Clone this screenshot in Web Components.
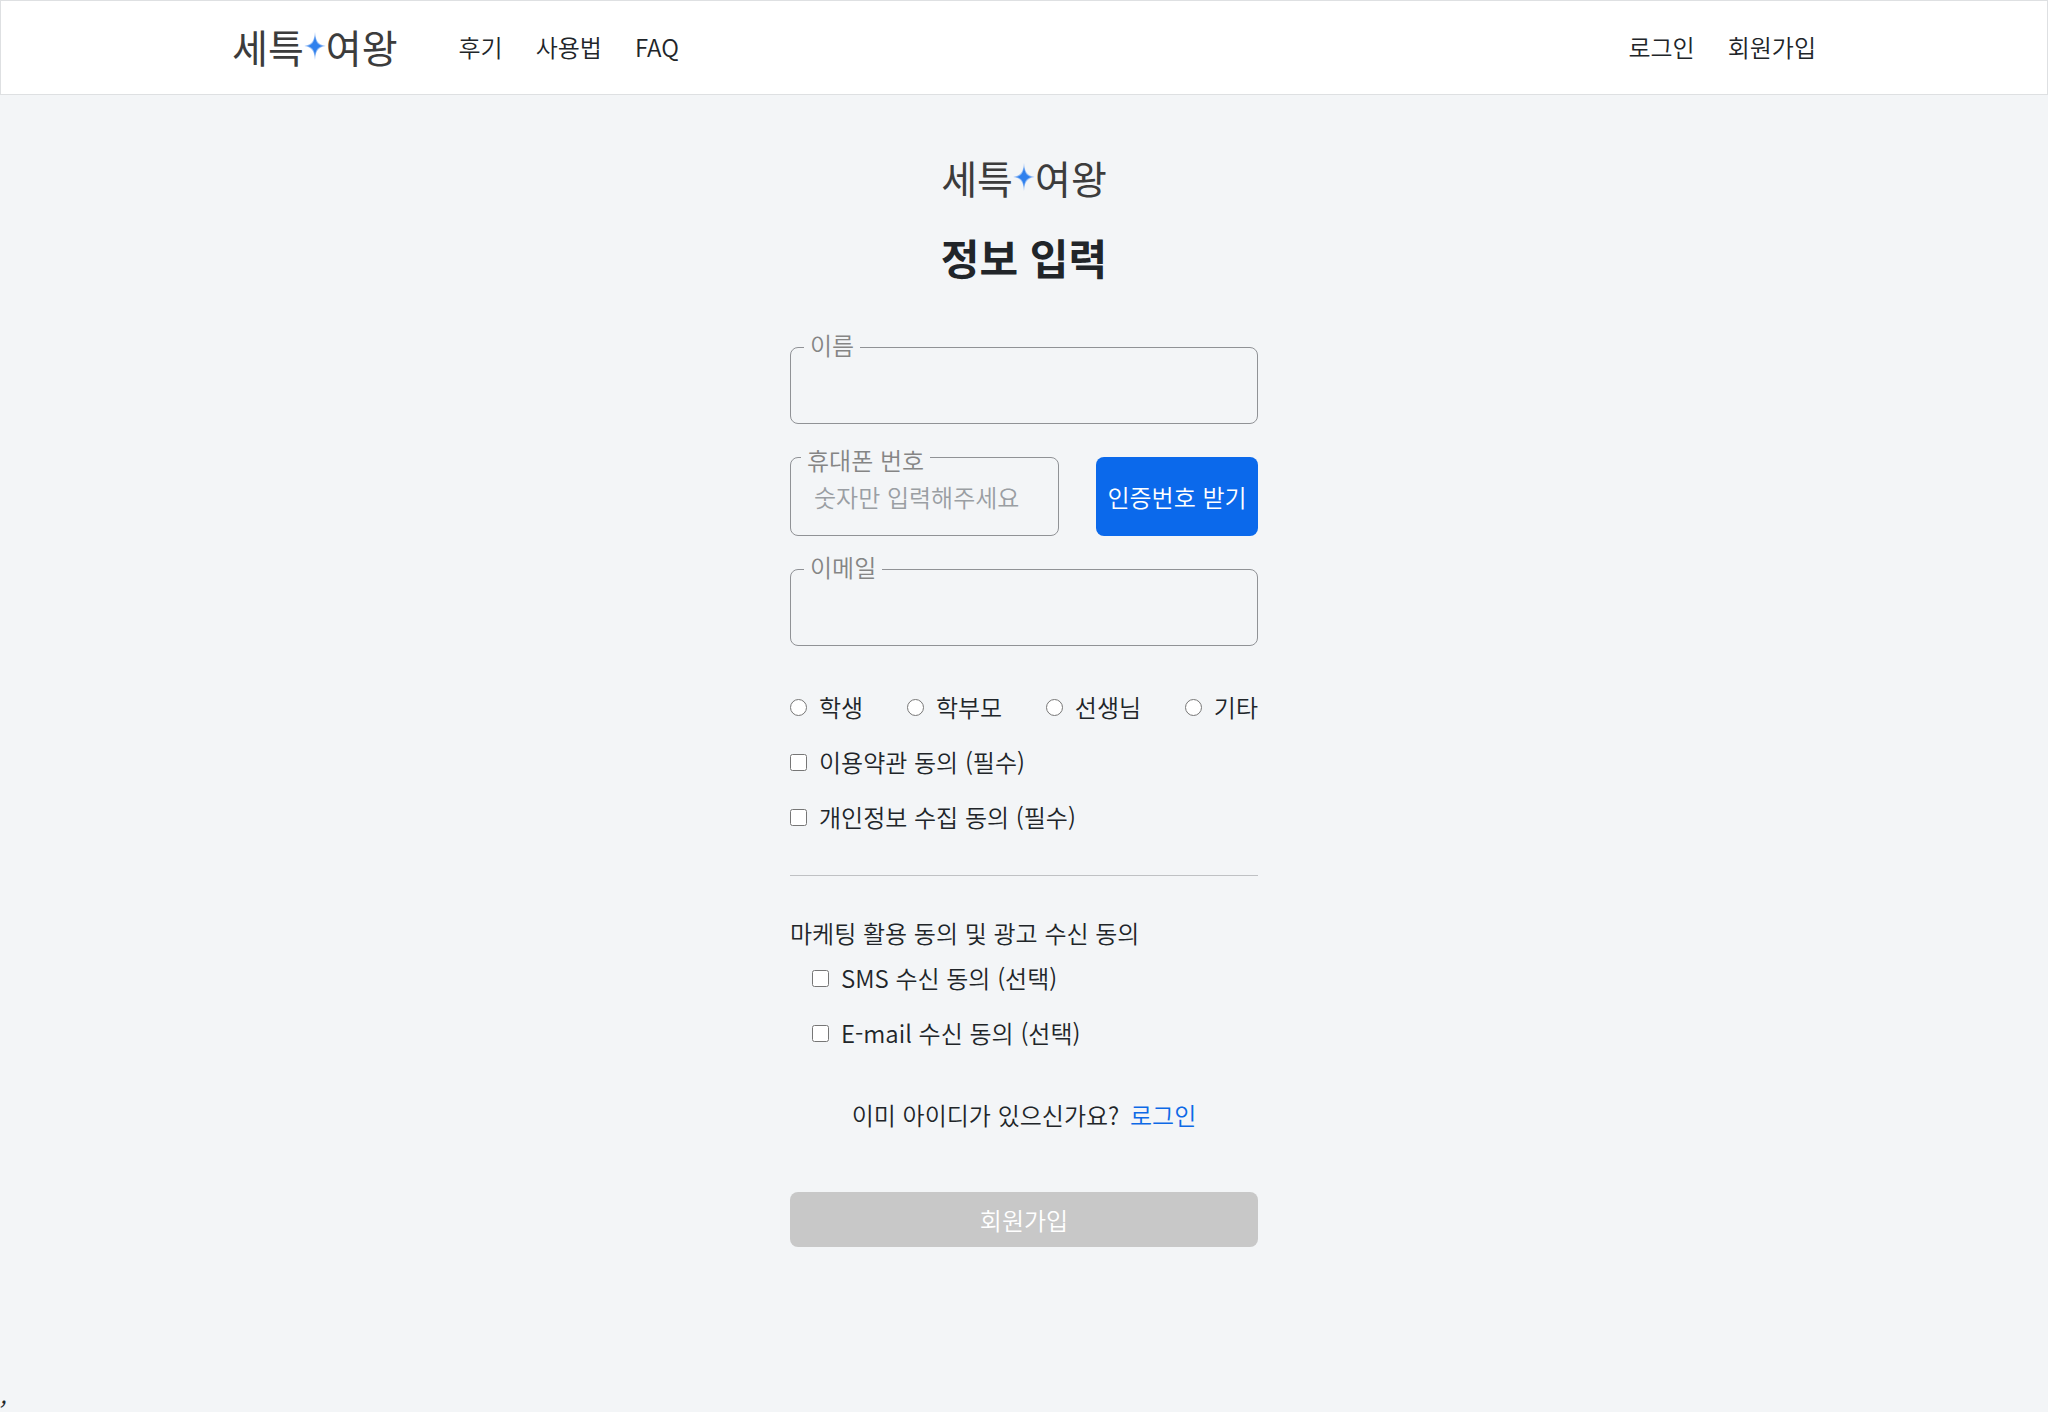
<!DOCTYPE html>
<html lang="ko">
<head>
<meta charset="UTF-8">
<meta name="viewport" content="width=device-width, initial-scale=1">
<title>세특여왕 - 정보 입력</title>
<style>
  * {
    box-sizing: border-box;
  }
  body {
    margin: 0;
    min-height: 100vh;
    display: flex;
    flex-direction: column;
    background-color: #f3f5f7;
    color: #212529;
    font-family: "Noto Sans CJK KR", sans-serif;
    font-size: 24px;
    font-weight: 350;
    line-height: 36px;
  }
  main {
    flex: 1;
    padding: 0 24px;
  }
  footer {
    font-style: italic;
  }
</style>
</head>
<body>
<site-navbar></site-navbar>
<main>
  <signup-form></signup-form>
</main>
<footer>,</footer>

<script>
class BrandLogo extends HTMLElement {
  connectedCallback() {
    this.attachShadow({ mode: 'open' });
    this.shadowRoot.innerHTML = `
      <style>
        :host {
          display: inline-flex;
          align-items: center;
          padding-bottom: 2px;
          color: #3c3c3c;
          font-size: 39px;
          font-weight: 400;
          line-height: 48px;
        }
        svg {
          width: 22px;
          height: 30px;
        }
      </style>
      <span>세특</span>
      <svg viewBox="0 0 20 28" aria-hidden="true">
        <path d="M10 1C10.6 9 12.6 12.800 20 14C12.600 15.200 10.600 19 10 27C9.400 19 7.400 15.200 0 14C7.400 12.800 9.400 9 10 1Z" fill="#8db8f5"/>
        <path d="M10 5C10.800 10.500 12.500 13 17 14C12.500 15 10.800 17.500 10 23C9.200 17.500 7.500 15 3 14C7.500 13 9.200 10.500 10 5Z" fill="#2f80ed"/>
      </svg>
      <span>여왕</span>
    `;
  }
}
customElements.define('brand-logo', BrandLogo);

class SiteNavbar extends HTMLElement {
  connectedCallback() {
    this.attachShadow({ mode: 'open' });
    this.shadowRoot.innerHTML = `
      <style>
        :host {
          display: block;
          background-color: #fff;
          border: 1px solid #dee0e2;
        }
        nav {
          display: flex;
          align-items: center;
          justify-content: space-between;
          max-width: 1584px;
          margin: 0 auto;
          padding: 21px 0 22px;
        }
        .start {
          display: flex;
          align-items: center;
          gap: 61px;
        }
        ul {
          display: flex;
          gap: 33px;
          list-style: none;
          margin: 0;
          padding: 0;
        }
        a {
          color: inherit;
          text-decoration: none;
        }
        .logo {
          display: flex;
        }
      </style>
      <nav>
        <div class="start">
          <a href="#" class="logo"><brand-logo></brand-logo></a>
          <ul>
            <li><a href="#">후기</a></li>
            <li><a href="#">사용법</a></li>
            <li><a href="#">FAQ</a></li>
          </ul>
        </div>
        <ul>
          <li><a href="#">로그인</a></li>
          <li><a href="#">회원가입</a></li>
        </ul>
      </nav>
    `;
  }
}
customElements.define('site-navbar', SiteNavbar);

class TextField extends HTMLElement {
  connectedCallback() {
    const type = this.getAttribute('type') || 'text';
    const placeholder = this.getAttribute('placeholder') || '';
    this.attachShadow({ mode: 'open' });
    this.shadowRoot.innerHTML = `
      <style>
        :host {
          display: block;
          position: relative;
        }
        input {
          display: block;
          box-sizing: border-box;
          width: 100%;
          height: 77px;
          padding: 0 23px;
          border: 1px solid #909296;
          border-radius: 8px;
          background: transparent;
          color: #212529;
          font: inherit;
        }
        input::placeholder {
          color: #9a9ea3;
          opacity: 1;
        }
        /* label sits on the top border and hides it */
        label {
          position: absolute;
          top: -20px;
          left: 14px;
          padding: 0 6px;
          background-color: #f3f5f7;
          color: #858585;
        }
        :host([compact]) input {
          height: 79px;
        }
        :host([compact]) label {
          top: -14px;
          left: 11px;
          line-height: 34px;
        }
      </style>
      <input id="field" type="${type}" placeholder="${placeholder}">
      <label for="field"><slot></slot></label>
    `;
  }
}
customElements.define('text-field', TextField);

const optionStyles = `
  label {
    display: flex;
    align-items: center;
    gap: 12px;
  }
  input {
    width: 17px;
    height: 17px;
    margin: 0;
  }
`;

class RolePicker extends HTMLElement {
  connectedCallback() {
    const roles = ['학생', '학부모', '선생님', '기타'];
    this.attachShadow({ mode: 'open' });
    this.shadowRoot.innerHTML = `
      <style>
        :host {
          display: flex;
          justify-content: space-between;
        }
        ${optionStyles}
      </style>
      ${roles.map(role => `<label><input type="radio" name="role" value="${role}">${role}</label>`).join('')}
    `;
  }
}
customElements.define('role-picker', RolePicker);

class CheckOption extends HTMLElement {
  connectedCallback() {
    this.attachShadow({ mode: 'open' });
    this.shadowRoot.innerHTML = `
      <style>
        :host {
          display: flex;
        }
        ${optionStyles}
      </style>
      <label><input type="checkbox"><span><slot></slot></span></label>
    `;
  }
}
customElements.define('check-option', CheckOption);

class ActionButton extends HTMLElement {
  connectedCallback() {
    const disabled = this.hasAttribute('disabled') ? 'disabled' : '';
    this.attachShadow({ mode: 'open' });
    this.shadowRoot.innerHTML = `
      <style>
        :host {
          display: grid;
        }
        button {
          min-height: 55px;
          padding: 0;
          border: 0;
          border-radius: 8px;
          background-color: #0b69eb;
          color: #fff;
          font: inherit;
          cursor: pointer;
        }
        button:disabled {
          background-color: #c8c8c8;
          cursor: default;
        }
      </style>
      <button type="button" ${disabled}><slot></slot></button>
    `;
  }
}
customElements.define('action-button', ActionButton);

class SignupForm extends HTMLElement {
  connectedCallback() {
    this.attachShadow({ mode: 'open' });
    this.shadowRoot.innerHTML = `
      <style>
        :host {
          display: block;
          max-width: 468px;
          margin: 0 auto;
          padding: 58px 0;
        }
        header {
          text-align: center;
        }
        brand-logo {
          display: flex;
          justify-content: center;
        }
        h1 {
          margin: 22px 0 58px;
          font-size: 42px;
          font-weight: 700;
          line-height: 64px;
        }
        .fields {
          display: grid;
          gap: 33px;
        }
        .phone {
          display: grid;
          grid-template-columns: 1fr 162px;
          gap: 37px;
        }
        .terms {
          display: grid;
          gap: 19px;
          margin-top: 43px;
        }
        hr {
          margin: 40px 0 39px;
          border: 0;
          border-top: 1px solid #bfc1c4;
        }
        p {
          margin: 0;
        }
        .marketing {
          display: grid;
          gap: 19px;
          margin-top: 9px;
          padding-left: 22px;
        }
        .account {
          margin: 46px 0 59px;
          text-align: center;
        }
        a {
          margin-left: 4px;
          color: #0d69e6;
          text-decoration: none;
        }
      </style>
      <header>
        <brand-logo></brand-logo>
        <h1>정보 입력</h1>
      </header>
      <form>
        <div class="fields">
          <text-field>이름</text-field>
          <div class="phone">
            <text-field type="tel" placeholder="숫자만 입력해주세요" compact>휴대폰 번호</text-field>
            <action-button>인증번호 받기</action-button>
          </div>
          <text-field type="email">이메일</text-field>
        </div>
        <div class="terms">
          <role-picker></role-picker>
          <check-option>이용약관 동의 (필수)</check-option>
          <check-option>개인정보 수집 동의 (필수)</check-option>
        </div>
        <hr>
        <p>마케팅 활용 동의 및 광고 수신 동의</p>
        <div class="marketing">
          <check-option>SMS 수신 동의 (선택)</check-option>
          <check-option>E-mail 수신 동의 (선택)</check-option>
        </div>
        <p class="account">이미 아이디가 있으신가요? <a href="#">로그인</a></p>
        <action-button disabled>회원가입</action-button>
      </form>
    `;
  }
}
customElements.define('signup-form', SignupForm);
</script>
</body>
</html>
